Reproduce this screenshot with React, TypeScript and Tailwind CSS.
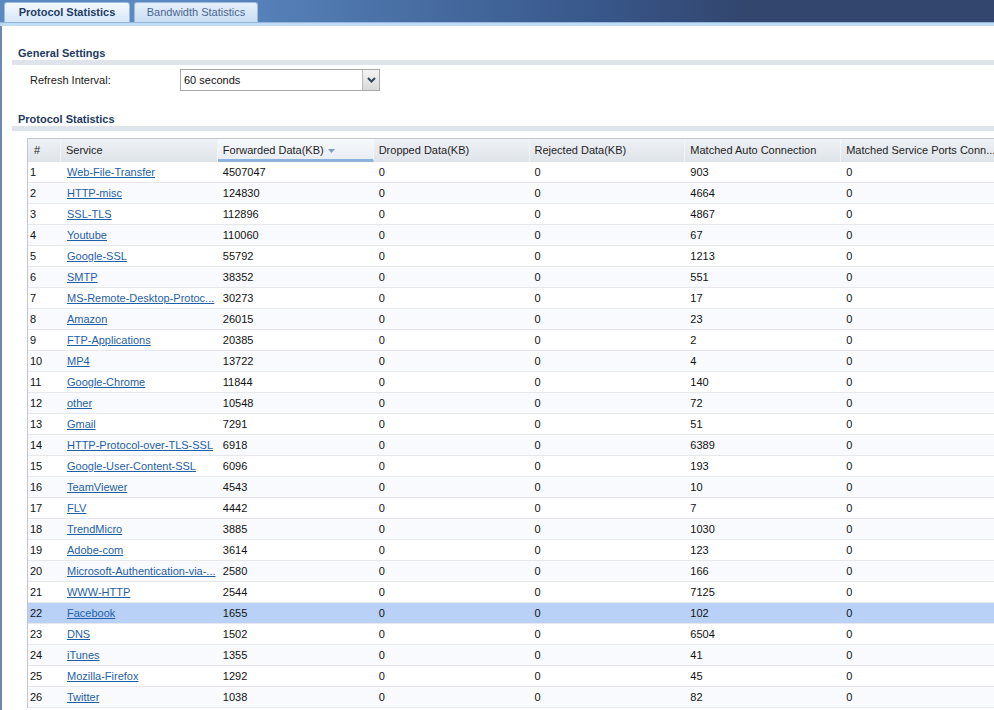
import React from "react";

type Row = [string, string, string, string];

const rows: Row[] = [
  ["Web-File-Transfer", "4507047", "903", "0"],
  ["HTTP-misc", "124830", "4664", "0"],
  ["SSL-TLS", "112896", "4867", "0"],
  ["Youtube", "110060", "67", "0"],
  ["Google-SSL", "55792", "1213", "0"],
  ["SMTP", "38352", "551", "0"],
  ["MS-Remote-Desktop-Protoc...", "30273", "17", "0"],
  ["Amazon", "26015", "23", "0"],
  ["FTP-Applications", "20385", "2", "0"],
  ["MP4", "13722", "4", "0"],
  ["Google-Chrome", "11844", "140", "0"],
  ["other", "10548", "72", "0"],
  ["Gmail", "7291", "51", "0"],
  ["HTTP-Protocol-over-TLS-SSL", "6918", "6389", "0"],
  ["Google-User-Content-SSL", "6096", "193", "0"],
  ["TeamViewer", "4543", "10", "0"],
  ["FLV", "4442", "7", "0"],
  ["TrendMicro", "3885", "1030", "0"],
  ["Adobe-com", "3614", "123", "0"],
  ["Microsoft-Authentication-via-...", "2580", "166", "0"],
  ["WWW-HTTP", "2544", "7125", "0"],
  ["Facebook", "1655", "102", "0"],
  ["DNS", "1502", "6504", "0"],
  ["iTunes", "1355", "41", "0"],
  ["Mozilla-Firefox", "1292", "45", "0"],
  ["Twitter", "1038", "82", "0"],
];

const font = { fontFamily: '"Liberation Sans", Arial, sans-serif' };

function SectionHeading({ title, className }: { title: string; className?: string }) {
  return (
    <div className={className}>
      <div className="pl-[6px] h-[14px] leading-[14px] text-[11px] font-bold text-[#1e3a5f]">{title}</div>
      <div className="h-[5px] bg-[#dfe3ea]" />
    </div>
  );
}

export default function App() {
  return (
    <div className="w-[994px] h-[710px] overflow-hidden bg-white flex flex-col" style={font}>
      {/* top tab bar */}
      <div className="h-[22px] shrink-0 flex items-end bg-linear-to-r from-[#5b89c1] from-20% via-[#38578a] via-60% to-[#32466e] to-75%">
        <div className="ml-[4px] w-[126px] h-[20px] pb-[1px] rounded-t-[3px] bg-linear-to-b from-[#f4f9ff] to-[#d6e7f8] border border-b-0 border-[#9dbbe0] flex items-center justify-center text-[11px] font-bold text-[#1f3c64]">
          Protocol Statistics
        </div>
        <div className="ml-[4px] w-[124px] h-[20px] pb-[1px] rounded-t-[3px] bg-linear-to-b from-[#e6f0fb] to-[#c9ddf2] border border-b-0 border-[#9dbbe0] flex items-center justify-center text-[11px] text-[#4a6690]">
          Bandwidth Statistics
        </div>
      </div>
      <div className="h-[4px] shrink-0 bg-[#c0dbf5] border-t border-[#93b6dc]" />

      {/* content */}
      <div className="flex-1 border-l-2 border-[#6b8ab3] pl-[10px] flex flex-col">
        <SectionHeading title="General Settings" className="mt-[20px]" />
        <div className="mt-[4px] flex items-center h-[22px]">
          <div className="pl-[18px] w-[168px] text-[11px] text-[#1a1a1a]">Refresh Interval:</div>
          <div className="w-[200px] h-[22px] border border-[#a9a9a9] flex items-stretch bg-white">
            <div className="flex-1 pl-[3px] flex items-center text-[11px] text-[#111]">60 seconds</div>
            <div className="w-[17px] border-l border-[#b8b8b8] bg-linear-to-b from-[#f4f4f4] to-[#d9d9d9] flex items-center justify-center">
              <svg width="9" height="6" viewBox="0 0 9 6">
                <path d="M1 1 L4.5 4.5 L8 1" stroke="#34465c" strokeWidth="2" fill="none" />
              </svg>
            </div>
          </div>
        </div>

        <SectionHeading title="Protocol Statistics" className="mt-[21px]" />

        {/* table */}
        <div className="mt-[7px] ml-[15px] border-l border-t border-[#c4c8ce] w-[995px] text-[11px]">
          <div className="flex h-[23px] bg-linear-to-b from-[#eef1f5] to-[#dfe4ea] text-[#1e1e1e]">
            <div className="w-[33px] pl-[6px] flex items-center border-r border-[#f3f5f8]">#</div>
            <div className="w-[157px] pl-[5px] flex items-center border-r border-[#f3f5f8]">Service</div>
            <div className="w-[156px] pl-[5px] flex items-center border-r border-[#f3f5f8] bg-linear-to-b from-[#f7f9fc] to-[#e9eef5] border-b-[3px] border-b-[#8db3dc] pt-[3px]">
              Forwarded Data(KB)
              <svg className="ml-[4px]" width="7" height="4" viewBox="0 0 7 4">
                <path d="M0 0 L7 0 L3.5 4 Z" fill="#7b9fcb" />
              </svg>
            </div>
            <div className="w-[156px] pl-[5px] flex items-center border-r border-[#f3f5f8]">Dropped Data(KB)</div>
            <div className="w-[156px] pl-[5px] flex items-center border-r border-[#f3f5f8]">Rejected Data(KB)</div>
            <div className="w-[156px] pl-[5px] flex items-center border-r border-[#f3f5f8]">Matched Auto Connection</div>
            <div className="w-[181px] pl-[5px] flex items-center">Matched Service Ports Conn...</div>
          </div>
          {rows.map((r, i) => {
            const n = i + 1;
            const bg = n === 22 ? "bg-[#b9d1f7]" : n % 2 === 0 ? "bg-[#f9fafd]" : "bg-white";
            return (
              <div key={n} className={`flex h-[21px] border-b border-[#e6e8eb] text-[#111] ${bg}`}>
                <div className="w-[33px] pl-[2px] flex items-center">{n}</div>
                <div className="w-[157px] pl-[6px] flex items-center whitespace-nowrap overflow-hidden">
                  <a href="#" className="text-[#1f5fa6] underline">{r[0]}</a>
                </div>
                <div className="w-[156px] pl-[5px] flex items-center">{r[1]}</div>
                <div className="w-[156px] pl-[5px] flex items-center">0</div>
                <div className="w-[156px] pl-[5px] flex items-center">0</div>
                <div className="w-[156px] pl-[5px] flex items-center">{r[2]}</div>
                <div className="w-[181px] pl-[5px] flex items-center">{r[3]}</div>
              </div>
            );
          })}
        </div>
      </div>
    </div>
  );
}
